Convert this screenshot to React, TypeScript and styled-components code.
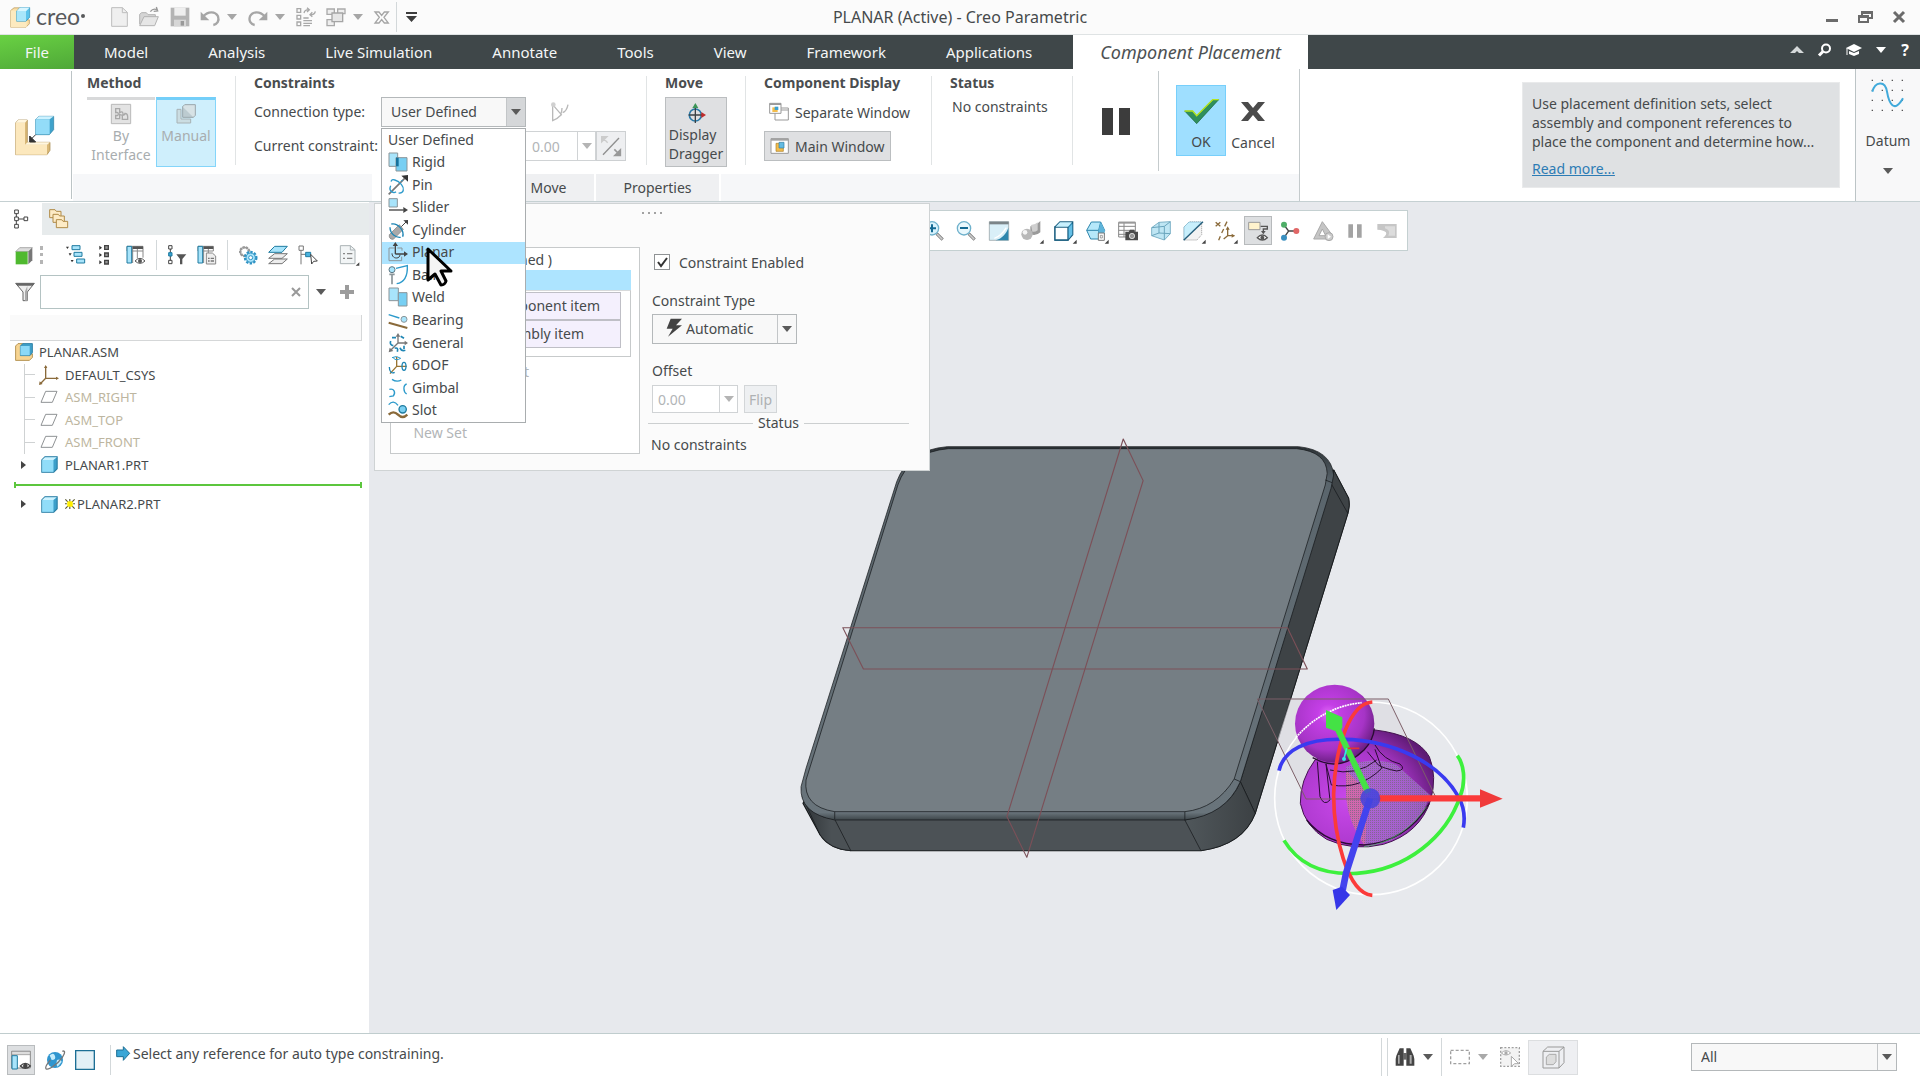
import React from 'react';
import styled, { createGlobalStyle, css } from 'styled-components';

const GlobalStyle = createGlobalStyle`
  *, *::before, *::after { box-sizing: border-box; }
  body { margin: 0; background: #fff; }
  body, button, input, select { font-family: "Noto Sans", "Open Sans", sans-serif; font-size: 14px; color: #464a4c; }
  button { border: 0; padding: 0; background: none; cursor: default; }
  svg { display: block; flex: none; overflow: visible; }
  ul { list-style: none; margin: 0; padding: 0; }
`;

/* ---------- icon helpers ---------- */
type IconProps = { w?: number; h?: number; vb?: string; children?: React.ReactNode };
const Icon = ({ w = 20, h = 20, vb = '0 0 60 60', children }: IconProps) => (
  <svg width={w} height={h} viewBox={vb} fill="none" aria-hidden="true">{children}</svg>
);
const Caret = ({ c = '#5a5a5a' }: { c?: string }) => (
  <svg width="10" height="6" viewBox="0 0 10 6" aria-hidden="true"><path d="M0 0h10L5 6z" fill={c} /></svg>
);
const CornerMark = () => <path d="M68 56v12H56z" fill="#444" />;

const blue = '#a8e4fb';
const teal = '#1f7ba0';
const tan = '#8a6a3a';

const I = {
  logo: (
    <Icon w={20} h={21} vb="0 0 60 62">
      <path d="M2 10 12 2h20v36h26v12L48 60H2z" fill="#fbdfa6" stroke="#b08d4c" strokeWidth="2" />
      <path d="M2 10h16v34h32v16H2z" fill="#fdeabf" />
      <path d="M20 12 30 1h29v29L48 42H20z" fill="#5cc3ec" stroke="#2c8fb8" strokeWidth="2" />
      <path d="M20 12h28v30H20z" fill="#a9e6fb" /><path d="m20 12 10-11h29L48 12z" fill="#d9f6ff" />
    </Icon>
  ),
  newFile: <Icon w={17} h={20} vb="0 0 51 60"><path d="M2 2h32l15 14v42H2z" fill="#efefef" stroke="#bdbdbd" strokeWidth="3" /><path d="M34 2v15h15" stroke="#bdbdbd" strokeWidth="3" /></Icon>,
  open: <Icon><path d="M2 52V22l6-5h14l5 6h22v8" fill="#d5d5d5" stroke="#b3b3b3" strokeWidth="3" /><path d="m2 56 13-27h43L47 56z" fill="#e6e6e6" stroke="#b3b3b3" strokeWidth="3" /><path d="M34 14Q42 3 54 8m-2-8 4 12-12 1" stroke="#999" strokeWidth="4" /></Icon>,
  save: <Icon><path d="M2 2h56v56H2z" fill="#b4b4b4" /><path d="M13 2h34v24H13z" fill="#efefef" /><path d="M12 38h36v20H12z" fill="#d6d6d6" /><path d="M32 42h10v14H32z" fill="#999" /></Icon>,
  undo: <Icon><path d="M10 28C24 12 46 12 54 28c5 14-3 24-14 26" stroke="#a6a6a6" strokeWidth="7" /><path d="M2 14v26h26z" fill="#a6a6a6" /></Icon>,
  redo: <Icon><path d="M50 28C36 12 14 12 6 28c-5 14 3 24 14 26" stroke="#a6a6a6" strokeWidth="7" /><path d="M58 14v26H32z" fill="#a6a6a6" /></Icon>,
  regen: <Icon><path d="M3 5h11v11H3zM3 25h11v11H3zM3 45h11v11H3zM22 33h16M22 41h26M22 49h26M22 56h20" stroke="#a8a8a8" strokeWidth="4" /><path d="M24 18q2-10 14-10m-5-6 7 6-7 7m25-2q-2 10-14 10m5 6-7-6 7-7" stroke="#a8a8a8" strokeWidth="4" /></Icon>,
  windows: <Icon><path d="M3 6h22v16H3zM35 6h22v14H35zM3 38h22v18H3z" fill="#eee" stroke="#aaa" strokeWidth="4" /><path d="M18 18h32v26H18z" fill="#e6e6e6" stroke="#a5a5a5" strokeWidth="4" /></Icon>,
  closeX: <Icon w={15} h={13} vb="0 0 45 39"><path d="M3 3h12l8 10 8-10h12L30 19l13 17H31l-8-10-8 10H3l13-17z" stroke="#a5a5a5" strokeWidth="4" /></Icon>,
  overflow: <Icon w={11} h={10} vb="0 0 11 10"><path d="M0 0h11v2H0zM0 4h11L5.500 10z" fill="#3d3d3d" /></Icon>,
  assemble: (
    <Icon w={39} h={39} vb="0 0 117 117">
      <path d="M2 20 10 12h27v67h68v24l-9 13H2z" fill="#d9b877" stroke="#a28244" strokeWidth="2" />
      <path d="M2 20h28v66h66v30H2z" fill="#fce8bd" /><path d="m2 20 8-8h27l-7 8zM30 86l8-7h67l-9 7z" fill="#fff6df" />
      <path d="M62 10 72 1h44v40l-13 15H62z" fill="#3fa2cb" stroke="#2a7da2" strokeWidth="2" /><path d="M62 10h42v45H62z" fill="#93dcf8" /><path d="m62 10 10-9h44l-12 9z" fill="#cdf2ff" />
      <path d="M62 56 50 68M44 60v18h18z" stroke="#333" strokeWidth="3" fill="#333" />
    </Icon>
  ),
  iface: <Icon><path d="M1 1h58v58H1z" fill="#e3e3e3" stroke="#b9b9b9" strokeWidth="3" /><path d="M14 14h12v12q8-6 10 2t-10 4v12H14V34q8 2 8-4t-8-4zM34 46V34q8 0 8-6 8 0 8 10v8z" stroke="#a9a9a9" strokeWidth="4" /></Icon>,
  manual: <Icon><path d="M3 16h12v29h29v12H3z" fill="#cbdde2" stroke="#a8b2b5" strokeWidth="3" /><path d="M20 8h32v32H20z" fill="#bccbd0" stroke="#9aa7ab" strokeWidth="3" /><path d="m20 8 6-6h32v32l-6 6" fill="#d7e2e5" stroke="#9aa7ab" strokeWidth="3" /></Icon>,
  convert: <Icon><path d="M8 10v46q12-4 26-18L8 8m30 24q12-4 16-24M32 38q4-10 4-20" stroke="#b9b9b9" strokeWidth="4" /><circle cx="10" cy="8" r="7" fill="#d0d0d0" /></Icon>,
  flipDir: <Icon><path d="M6 56 54 6" stroke="#8f8f8f" strokeWidth="4" /><path d="M2 2h16L2 18zM4 4l16 16" fill="#ccc" stroke="#ccc" strokeWidth="4" /><path d="M58 58V42L42 58zM54 54 40 40" fill="#999" stroke="#999" strokeWidth="5" /></Icon>,
  dragger: <Icon><circle cx="28" cy="36" r="18" stroke="#2779a8" strokeWidth="5" /><path d="M28 60V12M8 36h40" stroke="#3b4246" strokeWidth="4" /><path d="m28 0 9 15H19z" fill="#3d9558" /><path d="m60 36-14-9v18z" fill="#c02b2b" /></Icon>,
  sepWin: <Icon><path d="M18 18h40v36H18zM18 24h40" fill="#fff" stroke="#999" strokeWidth="3" /><path d="M2 4h34v30H2z" fill="#fff" stroke="#999" strokeWidth="3" /><path d="M2 4h34v5H2z" fill="#999" /><path d="M10 16h16v14H10z" fill="#f3bd4c" /><path d="M17 14h11v10H17z" fill="#3aa0d0" /></Icon>,
  mainWin: <Icon><path d="M3 8h52v44H3z" fill="#fff" stroke="#999" strokeWidth="3" /><path d="M3 8h52v6H3z" fill="#a2a2a2" /><path d="M18 22h22v24H18z" fill="#f3bd4c" stroke="#a97f28" strokeWidth="2" /><path d="M27 19h15v17H27z" fill="#64bbe2" stroke="#2d7ea5" strokeWidth="2" /></Icon>,
  pause: <Icon w={28} h={27} vb="0 0 28 27"><path d="M0 0h11v27H0zM17 0h11v27H17z" fill="#3c3c3c" /></Icon>,
  ok: <Icon w={35} h={25} vb="0 0 105 75"><path d="M2 36h24l12 14L86 2h18L38 74z" fill="#2f8f5b" stroke="#1e6640" strokeWidth="2" /><path d="M2 36h24l12 14L86 2h18" stroke="#b5e61d" strokeWidth="4" /></Icon>,
  cancel: <Icon w={24} h={19} vb="0 0 24 19"><path d="M0 0h7l5 6 5-6h7l-8 9.500 8 9.500h-7l-5-6-5 6H0l8-9.500z" fill="#4b4b4b" /></Icon>,
  datum: (
    <Icon w={34} h={34} vb="0 0 102 102">
      {[4, 34, 64, 94].map(y => [4, 34, 64, 94].map(x => <path key={`${x}-${y}`} d={`M${x - 2} ${y - 2}h4v4h-4z`} fill="#555" />))}
      <path d="M4 38C12 8 42 2 48 38s22 66 48 20" stroke="#41aadb" strokeWidth="6" />
    </Icon>
  ),
  treeTab: <Icon w={15} h={20} vb="0 0 45 60"><path d="M2 3h11v11H2zM2 24h11v11H2zM2 46h11v11H2zM30 24h11v11H30zM7 14v10M7 35v11M13 30h17" stroke="#444" strokeWidth="3" /></Icon>,
  folders: <Icon>{[[2, 2], [12, 16], [22, 32]].map(([x, y]) => <path key={x} d={`M${x} ${y}h16l4 5h14v19H${x}z`} fill="#fdebc6" stroke="#b08b48" strokeWidth="3" />)}</Icon>,
  greenCube: <Icon><path d="m2 20 12-12h38L40 20z" fill="#ddd" stroke="#888" strokeWidth="2" /><path d="M40 20 52 8v38L40 58z" fill="#777" /><path d="M2 20h36v38H2z" fill="#4fb92f" /></Icon>,
  expand: <Icon>{[[0, 2, 18], [8, 22, 24], [14, 42, 32]].map(([x, y, r]) => <g key={y}><path d={`M${x} ${y + 3}h9l-5 7z`} fill="#333" /><path d={`M${r} ${y}h24v12h-24z`} fill={blue} stroke={teal} strokeWidth="3" /></g>)}</Icon>,
  list: <Icon>{[2, 24, 46].map(y => <g key={y}><path d={`M10 ${y}l8 6-8 6z`} fill="#333" /><path d={`M26 ${y}h11v11h-11z`} fill="#999" stroke="#444" strokeWidth="4" /></g>)}</Icon>,
  columnsEye: <Icon><path d="M3 4h48v14H3zM20 4v50M34 4v36M51 18v20" stroke="#888" strokeWidth="3" /><path d="M3 4h14v50H3z" fill={blue} stroke={teal} strokeWidth="3" /><path d="M20 4h31v8H20z" fill="#555" /><path d="M27 48q15-16 30 0-15 14-30 0z" fill="#fff" stroke="#555" strokeWidth="3" /><circle cx="42" cy="48" r="6" fill="#555" /></Icon>,
  filterTree: <Icon><path d="M5 2h10v10H5zM5 46h10v10H5zM10 12v34" stroke="#444" strokeWidth="3" /><path d="M5 23h10v10H5z" fill="#39a4d4" stroke={teal} strokeWidth="3" /><path d="M28 28h30L46 42v16h-7V42z" fill="#555" /></Icon>,
  columnsDoc: <Icon><path d="M3 4h46v14H3zM20 4v50M34 4v20" stroke="#888" strokeWidth="3" /><path d="M3 4h14v50H3z" fill={blue} stroke={teal} strokeWidth="3" /><path d="M20 4h29v8H20z" fill="#555" /><path d="M28 24h18l10 9v24H28z" fill="#eee" stroke="#888" strokeWidth="3" /><path d="M33 40h18M33 48h18" stroke="#777" strokeWidth="4" strokeDasharray="5 3 12 0" /></Icon>,
  gears: <Icon><circle cx="20" cy="20" r="13" stroke="#999" strokeWidth="8" strokeDasharray="6 3" /><circle cx="20" cy="20" r="13" stroke="#999" strokeWidth="4" /><circle cx="38" cy="38" r="17" fill="#e5f7ff" stroke="#2f93c4" strokeWidth="7" strokeDasharray="7 4" /><circle cx="38" cy="38" r="14" fill={blue} stroke="#2f93c4" strokeWidth="3" /><circle cx="38" cy="38" r="6" fill="#fff" stroke="#2f93c4" strokeWidth="3" /></Icon>,
  layers: <Icon><path d="M2 56h40l16-14H20zM2 40h40l16-14H20z" fill="#ededed" stroke="#777" strokeWidth="3" /><path d="M2 22h40L58 4H20z" fill={blue} stroke={teal} strokeWidth="3" /></Icon>,
  pickTree: <Icon><path d="M3 3h13v13H3zM9 16v42M9 28h14" stroke="#777" strokeWidth="3" /><path d="M23 22h15v13H23z" fill="#4bb4df" stroke={teal} strokeWidth="3" /><path d="m38 28 20 20-11 1-6 8z" fill="#fff" stroke="#444" strokeWidth="3" /></Icon>,
  docList: <Icon><path d="M4 2h30l14 12v42H4z" fill="#f2f5f6" stroke="#aab2b5" strokeWidth="3" /><path d="M34 2v13h14" stroke="#aab2b5" strokeWidth="3" /><path d="M12 26h6M24 26h16M12 40h6M24 40h16" stroke="#888" strokeWidth="4" /><path d="M61 52v10H50z" fill="#444" /></Icon>,
  funnel: <Icon><path d="M2 4h56L37 30v26H24V30z" fill="#eee" stroke="#666" strokeWidth="3" /><path d="M2 4h56l-5 7H7z" fill="#666" /><path d="M37 12v44h-7V28z" fill="#aaa" /></Icon>,
  asm: <Icon w={18} h={18}><path d="m2 10 8-8h16v34h32v12L48 58H2z" fill="#f7d491" stroke="#b08d4c" strokeWidth="3" /><path d="M18 10 26 2h32v30L50 42H18z" fill="#3f9fc8" stroke="#2c7ea3" strokeWidth="3" /><path d="M18 10h31v31H18z" fill="#8bd9f7" /></Icon>,
  csys: <Icon><path d="M20 4v36h34M20 40 4 56" stroke={tan} strokeWidth="4" /><path d="m20 0 5 9H15zM60 40l-9 5V35zM0 60l2-11 9 8z" fill={tan} /></Icon>,
  plane: <Icon w={18} h={14} vb="0 0 54 42"><path d="M17 4h34L37 37H3z" stroke="#8f9294" strokeWidth="3" /></Icon>,
  part: <Icon w={17} h={17}><path d="M3 14 14 3h43v42L45 57H3z" fill="#3c9fca" stroke="#2a7ea4" strokeWidth="4" /><path d="M4 14h40v42H4z" fill="#91ddf9" /><path d="M4 14 14 4h42L44 14z" fill="#cef3ff" /></Icon>,
  spark: <Icon w={10} h={10} vb="0 0 27 27"><path d="M6 6h15v15H6z" fill="#ffee00" /><path d="M1 1l6 6M26 1l-6 6M1 26l6-6M26 26l-6-6M13 0v6M13 21v6M0 13h5M22 13h5" stroke="#55552a" strokeWidth="3" /></Icon>,
  expander: <Icon w={5} h={8} vb="0 0 5 8"><path d="M0 0l5 4-5 4z" fill="#444" /></Icon>,
};

const menuIcons: Record<string, React.ReactNode> = {
  Rigid: <Icon><path d="M3 3h26v40H3z" fill={blue} stroke="#8b9599" strokeWidth="3" /><path d="M24 17h33v40H24z" fill="#77cff3" stroke="#8b9599" strokeWidth="3" /><path d="M24 17h8v26h-8z" fill="#15719c" /></Icon>,
  Pin: <Icon><path d="M2 58 50 10" stroke="#777" strokeWidth="5" /><path d="M60 0v20L40 2z" fill="#333" /><path d="M10 20c-2-12 20-4 30 8s8 28-8 26M8 32c-8 18 10 24 16 18M40 18l4-2" stroke="#2c9acb" strokeWidth="4" /></Icon>,
  Slider: <Icon><path d="M3 5h25v25H3z" fill={blue} stroke="#8b9599" strokeWidth="3" /><path d="M3 39h44" stroke="#444" strokeWidth="4" /><path d="m60 39-14-9v18z" fill="#444" /></Icon>,
  Cylinder: <Icon><path d="M4 44 34 14l12 14-30 30q-14 0-12-14z" fill="#a9a9a9" stroke="#777" strokeWidth="2" /><path d="M40 20 54 6" stroke="#444" strokeWidth="3" /><path d="M60 0v14L46 1z" fill="#444" /><path d="M10 12c20-4 40 20 34 38M6 22c0 20 18 32 32 30" stroke="#1f86b5" strokeWidth="4" /></Icon>,
  Planar: <Icon><path d="M20 18H3v38h38V44M28 18h14v8" stroke="#8b9599" strokeWidth="3" /><path d="M22 36V8M22 36h28" stroke="#444" strokeWidth="4" /><path d="m22 0 8 12H14zM60 36l-12-8v16z" fill="#444" /><path d="M12 34c0 18 24 18 24 4" stroke="#444" strokeWidth="3" /></Icon>,
  Ball: <Icon><circle cx="12" cy="14" r="9" fill={blue} stroke="#5d7884" strokeWidth="3" /><path d="M12 26v32M4 28h16" stroke="#8b9599" strokeWidth="5" /><path d="M24 10 58 2q2 48-32 54" stroke="#2c9acb" strokeWidth="4" /></Icon>,
  Weld: <Icon><path d="M3 3h28v38H3z" fill={blue} stroke="#8b9599" strokeWidth="3" /><path d="M31 17h26v40H31z" fill="#77cff3" stroke="#8b9599" strokeWidth="3" /></Icon>,
  Bearing: <Icon><path d="m2 14 32 10" stroke="#2c9acb" strokeWidth="4" /><path d="m2 38 56 16" stroke="#8a6a3a" strokeWidth="6" /><circle cx="48" cy="28" r="9" fill={blue} stroke="#8b9599" strokeWidth="3" /></Icon>,
  General: <Icon><path d="M30 30V8M30 30h22M30 30 8 52" stroke="#777" strokeWidth="4" /><path d="m30 0 7 11H23zM60 30l-10-7v14zM2 58l3-14 11 10z" fill="#777" /><path d="M12 14h12M38 10l10 6M8 24q-4 12 8 14M36 44q4 12 16 8M48 38v10M20 46q12-4 8 10" stroke="#1f86b5" strokeWidth="5" /></Icon>,
  '6DOF': <Icon><path d="M26 34V6M26 34h30M26 34 6 56" stroke="#9a7431" strokeWidth="4" /><path d="M12 8q14-8 26 2M14 6q8 14 24 4" stroke="#2c9acb" strokeWidth="3" /><ellipse cx="48" cy="34" rx="6" ry="12" stroke="#1f86b5" strokeWidth="4" /><path d="M4 36c0 16 8 20 16 16" stroke="#1f86b5" strokeWidth="4" /></Icon>,
  Gimbal: <Icon><path d="M12 4q14 10 28 2M56 18c-12 4-10 24 0 30M4 34c14-4 20 10 12 20l-12 2" stroke="#2c9acb" strokeWidth="4" /></Icon>,
  Slot: <Icon><path d="M2 44q14-14 28 0t28 0" stroke="#8a6a3a" strokeWidth="7" /><path d="M2 14q14-16 28 2" stroke="#2c9acb" strokeWidth="4" /><circle cx="44" cy="28" r="11" fill="#7bd0f2" stroke={teal} strokeWidth="4" /></Icon>,
};

const viewTools: { name: string; on?: boolean; icon: React.ReactNode }[] = [
  { name: 'Refit', icon: <Icon><circle cx="24" cy="24" r="18" fill="#d9f3fd" stroke="#2a86ad" strokeWidth="4" /><path d="m38 38 18 18" stroke="#999" strokeWidth="8" /></Icon> },
  { name: 'Zoom in', icon: <Icon><path d="m38 38 18 18" stroke="#777" strokeWidth="9" /><path d="m39 39 16 16" stroke="#ccc" strokeWidth="5" /><circle cx="24" cy="22" r="20" fill="#d9f3fd" stroke="#6fb1cc" strokeWidth="4" /><path d="M12 22h24M24 10v24" stroke="#146a93" strokeWidth="6" /></Icon> },
  { name: 'Zoom out', icon: <Icon><path d="m38 38 18 18" stroke="#777" strokeWidth="9" /><path d="m39 39 16 16" stroke="#ccc" strokeWidth="5" /><circle cx="24" cy="22" r="20" fill="#e9f8fd" stroke="#6fb1cc" strokeWidth="4" /><path d="M12 21h24" stroke="#146a93" strokeWidth="6" /></Icon> },
  { name: 'Repaint', icon: <Icon><path d="M1 2h58v56H1z" fill="#d9eff8" stroke="#8b9599" strokeWidth="2" /><path d="M1 2h58v8H1z" fill="#7b8488" /><path d="M58 20v38H20C40 52 52 38 58 20z" fill="#2e86ad" /><path d="M16 52Q36 46 52 20" stroke="#fff" strokeWidth="4" /></Icon> },
  { name: 'Rendering', icon: <Icon><path d="M28 16q14 0 30-16v34q-12 12-30 6z" fill="#9a9a9a" /><path d="M30 12q12 0 20-8v24q-8 6-16 4z" fill="#cfcfcf" /><circle cx="18" cy="40" r="17" fill="#b8b8b8" /><circle cx="12" cy="34" r="7" fill="#f4f4f4" /><CornerMark /></Icon> },
  { name: 'Display style', icon: <Icon><path d="M3 18 18 3h38v38L42 57H3z" fill="#2c87b0" stroke="#1b5f80" strokeWidth="4" /><path d="M3 18h39v39H3z" fill="#fff" stroke="#1b5f80" strokeWidth="4" /><path d="M5 17 18 4h36L42 17z" fill="#c8f0fd" /><path d="M44 20 55 8v32L44 54z" fill="#64bfe6" /><CornerMark /></Icon> },
  { name: 'Saved orientations', icon: <Icon><path d="M2 28 16 3h28l12 25-14 26H14z" fill="#b6e8fa" stroke="#2e86ad" strokeWidth="3" /><path d="M2 28h36L44 3M38 28v26" stroke="#2e86ad" strokeWidth="3" /><path d="M38 28 44 3l12 25v14H38z" fill="#5eb4da" /><path d="M37 36h18v22H37z" fill="#fff" stroke="#777" strokeWidth="3" /><path d="M43 43h6v8h-6z" stroke="#777" strokeWidth="2" /><CornerMark /></Icon> },
  { name: 'View manager', icon: <Icon><path d="M2 4h50v44H2zM2 16h50M2 28h50M2 40h30M18 4v44" stroke="#888" strokeWidth="3" fill="#fff" /><path d="M2 2h50v6H2z" fill="#999" /><path d="M22 32h10l4-6h12l3 6h9v26H22z" fill="#4c4c4c" /><circle cx="42" cy="45" r="8" fill="#999" stroke="#fff" strokeWidth="2" /></Icon> },
  { name: 'Perspective', icon: <Icon><path d="M2 20 24 4l34-2v36L40 57 2 44z" fill="#bfe6f4" stroke="#7fb3c8" strokeWidth="3" /><path d="M2 20 40 16l18-14M40 16v41M24 4v32L2 44M24 36l34 2" stroke="#6aa5bd" strokeWidth="3" /></Icon> },
  { name: 'Section', icon: <Icon><path d="M3 18 18 3h38v38L42 57H3z" fill="#f3f3f3" stroke="#999" strokeWidth="3" strokeDasharray="3 3" /><path d="M3 57V18L18 3h38z" fill="#c8effc" stroke="#7bb7cf" strokeWidth="2" /><path d="M2 58 60 2" stroke="#245d7a" strokeWidth="4" /><CornerMark /></Icon> },
  { name: 'Datum display', icon: <Icon><path d="m2 4 14 12M16 4 2 16M36 2l-7 14M26 24l-6 12M16 46l-5 12" stroke={tan} strokeWidth="4" /><path d="M38 22v22h20M38 44 26 54" stroke={tan} strokeWidth="4" /><path d="m60 44-10-6v12zM38 16l6 10H32z" fill={tan} /><CornerMark /></Icon> },
  { name: 'Annotation display', on: true, icon: <Icon><path d="M2 4h34v22H2z" fill="#fff3cd" stroke="#999" strokeWidth="3" /><path d="M38 16h20v8H46v12" stroke="#555" strokeWidth="4" /><path d="m46 40-7-10h14z" fill="#555" /><path d="M28 50q15-16 30 0-15 14-30 0z" fill="#fff" stroke="#555" strokeWidth="4" /><circle cx="43" cy="50" r="6" fill="#555" /></Icon> },
  { name: 'Spin center', icon: <Icon><path d="M12 12 26 30 12 50M26 30h22" stroke="#444" strokeWidth="4" /><circle cx="12" cy="11" r="9" fill="#4fae68" /><circle cx="49" cy="30" r="9" fill="#e06666" /><circle cx="12" cy="50" r="9" fill="#3a8fbf" /></Icon> },
  { name: 'Simulation', icon: <Icon><path d="M28 2 2 54h44L56 40z" fill="#c5c5c5" stroke="#aaa" strokeWidth="3" /><path d="M28 24 18 44h20z" fill="#fff" stroke="#aaa" strokeWidth="3" /><circle cx="48" cy="47" r="12" fill="#ccc" stroke="#aaa" strokeWidth="3" /><path d="m44 40 10 7-10 7z" fill="#fff" /></Icon> },
  { name: 'Pause simulation', icon: <Icon><path d="M10 10h14v40H10zM36 10h14v40H36z" fill="#a3a3a3" /></Icon> },
  { name: 'Simulation results', icon: <Icon><path d="M1 9h58v42H18q26-22-17-25z" fill="#c6c6c6" /><path d="M24 16h30v28H34q8-16-10-22z" fill="#dcdcdc" /></Icon> },
];

/* ---------- page frame ---------- */
const Page = styled.div`display: flex; flex-direction: column; min-height: 100vh; background: #fff;`;
const flexCenter = css`display: flex; align-items: center; justify-content: center;`;

const TitleBar = styled.header`
  display: grid; grid-template-columns: 1fr auto 1fr; align-items: center; height: 35px;
  background: #fbfbfb; border-bottom: 1px solid #dfe3e4;
`;
const QuickBar = styled.div`display: flex; align-items: center; padding-left: 10px; height: 34px;`;
const Brand = styled.span`
  font-family: Lato, sans-serif; font-size: 23px; line-height: 28px; color: #58595b; margin: 0 0 2px 6px; width: 75px;
  display: inline-flex; align-items: center; gap: 1px;
`;
const BrandDot = styled.i`width: 4px; height: 4px; border-radius: 50%; background: #58595b;`;
const QuickButton = styled.button<{ $gap?: number }>`${flexCenter} margin-right: ${p => p.$gap ?? 11}px;`;
const VLine = styled.span<{ $h?: number; $m?: string }>`
  width: 1px; height: ${p => p.$h ?? 30}px; margin: ${p => p.$m ?? '0'}; background: #d3d8da; flex: none;
`;
const Title = styled.h1`margin: 0; font-size: 16px; line-height: 20px; font-weight: 400;`;
const WindowButtons = styled.div`display: flex; justify-content: flex-end; align-items: center; gap: 20px; padding-right: 15px;`;

const TabBar = styled.nav`display: flex; height: 34px; background: #3f4749; color: #fff;`;
const Tab = styled.button<{ $kind?: 'file' | 'active' }>`
  color: #f4f6f6; padding: 0 30px; font-size: 15px; height: 34px; white-space: nowrap;
  ${p => p.$kind === 'file' && css`width: 74px; padding: 0; background: linear-gradient(170deg, #69d143, #4fa838);`}
  ${p => p.$kind === 'active' && css`background: #fff; color: #4d5153; font-style: italic; font-size: 18px; padding: 0; width: 235px; margin-left: 11px;`}
`;
const TabTools = styled.div`display: flex; align-items: center; margin-left: auto; gap: 14px; padding: 0 10px 4px 0;`;
const HelpMark = styled.button`color: #fff; font-weight: 700; font-size: 16px; line-height: 20px; width: 10px;`;

const Ribbon = styled.section`display: flex; height: 133px; border-bottom: 1px solid #c5d0d2; background: #fff;`;
const RibbonMark = styled.div`
  width: 72px; flex: none; margin: 2px 0; border-right: 1px solid #bcc4c6; padding: 45px 0 0 15px;
`;
const Dash = styled.div`display: flex; flex-direction: column; width: 1228px; padding-left: 1px; border-right: 1px solid #c5cbcd;`;
const Groups = styled.div`display: flex; height: 105px; padding: 7px 0 9px;`;
const Group = styled.section<{ $w: number; $pl?: number }>`
  width: ${p => p.$w}px; padding-left: ${p => p.$pl ?? 18}px; border-right: 1px solid #e1e4e5; position: relative; flex: none;
`;
const GroupTitle = styled.h2`margin: 0 0 7px; font-size: 14px; line-height: 14px; font-weight: 700; color: #4a4d4f;`;
const Row = styled.div<{ $gap?: number }>`display: flex; align-items: center; gap: ${p => p.$gap ?? 0}px;`;
const Stack = styled.div`display: flex; flex-direction: column; gap: 4px;`;

const MethodButton = styled.button<{ $on?: boolean }>`
  width: ${p => (p.$on ? 60 : 68)}px; height: 70px; display: flex; flex-direction: column; align-items: center;
  padding-top: 4px; color: #a8adaf; line-height: 19px; gap: 2px;
  border-top: 3px solid #d8d9da;
  ${p => p.$on && css`background: #cfeffc; border: 1px solid #84d5fa; border-top: 3px solid #74cff9;`}
`;
const FieldLabel = styled.label`width: 127px; line-height: 30px; flex: none; white-space: nowrap;`;

const SelectBox = styled.div<{ $w: number; $h?: number; $dim?: boolean }>`
  position: relative; width: ${p => p.$w}px; height: ${p => p.$h ?? 30}px; flex: none; display: flex;
  border: 1px solid ${p => (p.$dim ? '#d3d6d8' : '#b4b8ba')}; background: #f8f8f8;
  select { appearance: none; border: 0; background: none; width: 100%; padding: 0 24px 2px 9px; outline: 0; color: inherit; opacity: 1; }
  color: ${p => (p.$dim ? '#b2b5b7' : '#464a4c')};
`;
const SelectArrow = styled.span<{ $on?: boolean }>`
  ${flexCenter} position: absolute; top: 0; right: 0; bottom: 0; width: 19px; pointer-events: none;
  border-left: 1px solid #c3c6c8; background: ${p => (p.$on ? '#d5d7d9' : 'transparent')};
`;
const IconSelect = styled(SelectBox)`select { padding-left: 33px; } > svg { position: absolute; left: 11px; top: 3px; }`;

const NumberBox = styled.div<{ $w: number; $h: number }>`
  display: flex; width: ${p => p.$w}px; height: ${p => p.$h}px; border: 1px solid #d0d3d5; background: #fff;
  input { border: 0; width: 100%; min-width: 0; background: none; color: #b2b5b7; padding: 0 0 0 5px; }
  button { ${flexCenter} width: 18px; flex: none; border-left: 1px solid #d0d3d5; }
`;
const OffsetBox = styled(NumberBox)`margin-left: 3px; input { padding-left: 11px; }`;
const ConvertButton = styled.button`margin-left: 24px;`;
const SquareButton = styled.button`${flexCenter} width: 30px; height: 30px; background: #eeeff1; border: 1px solid #cdd0d2;`;

const Menu = styled.ul`
  position: absolute; z-index: 30; left: 145px; top: 52px; width: 145px; height: 295px; background: #fff;
  border: 1px solid #a9adaf; display: flex; flex-direction: column;
`;
const MenuItem = styled.li<{ $hot?: boolean }>`
  flex: 1; display: flex; align-items: center; gap: 4px; padding: 0 0 1px 6px; line-height: 20px;
  background: ${p => (p.$hot ? '#ade4ff' : 'none')};
`;
const Pointer = styled.div`position: absolute; z-index: 40; left: 190px; top: 171px;`;

const PressedButton = styled.button<{ $w: number; $tall?: boolean }>`
  width: ${p => p.$w}px; height: ${p => (p.$tall ? 70 : 30)}px; background: #dfe0e2; border: 1px solid #bbbec0;
  display: flex; align-items: center; gap: ${p => (p.$tall ? 2 : 5)}px; line-height: 19px; padding-left: ${p => (p.$tall ? 0 : 5)}px;
  ${p => p.$tall && css`flex-direction: column; padding-top: 5px; text-align: left;`}
`;
const PlainButton = styled.button`display: flex; align-items: center; height: 30px; gap: 6px; padding-left: 5px; margin-bottom: 4px;`;
const StatusText = styled.p`margin: 0 0 0 2px; line-height: 20px;`;
const PauseButton = styled.button`${flexCenter} width: 86px; border-right: 1px solid #c5cbcd; height: 100px; margin-top: -5px;`;
const Decision = styled.div`display: flex; padding: 9px 0 0 17px; gap: 2px;`;
const BigButton = styled.button<{ $on?: boolean }>`
  width: 50px; height: 71px; display: flex; flex-direction: column; align-items: center; justify-content: space-between;
  padding: 13px 0 4px; line-height: 19px; white-space: nowrap;
  ${p => (p.$on ? css`background: #9fdfff; border: 1px solid #77cffb;` : css`padding-top: 17px;`)}
`;
const DashTabs = styled.div`display: flex; height: 27px; background: #f6f7f9; padding-left: 299px;`;
const DashTab = styled.button<{ $w: number; $active?: boolean }>`
  width: ${p => p.$w}px; background: ${p => (p.$active ? '#fff' : '#eff0f2')}; border-right: 2px solid #fff;
`;
const HelpBox = styled.aside`
  width: 318px; height: 106px; margin: 13px 15px 0 auto; padding: 11px 9px; background: #dfe1e3; border: 1px solid #e9eaeb;
  line-height: 19px; white-space: nowrap;
  p { margin: 0 0 8px; }
  a { color: #2d7cb5; line-height: 20px; }
`;
const DatumButton = styled.button`
  width: 65px; background: #f8f8f9; border-left: 1px solid #bcc4c6; display: flex; flex-direction: column; align-items: center;
  padding: 10px 0 27px; justify-content: space-between;
`;

/* ---------- body ---------- */
const Body = styled.main`flex: 1; display: flex; min-height: 831px;`;
const TreePane = styled.aside`width: 369px; flex: none; display: flex; flex-direction: column; background: #fff; font-size: 13px;`;
const TreeTabs = styled.div`display: flex; height: 32px; background: #e7ebec; margin-top: 1px;`;
const TreeTab = styled.button<{ $on?: boolean }>`${flexCenter} width: ${p => (p.$on ? 42 : 34)}px; background: ${p => (p.$on ? '#fff' : 'none')};`;
const TreeTools = styled.div`display: flex; align-items: center; gap: 10px; height: 40px; padding: 0 10px 0 15px;`;
const Handle = styled.span`width: 3px; height: 18px; border-left: 3px dotted #b5b5b5; margin-right: 13px; margin-left: -5px;`;
const PushRight = styled.button`margin-left: auto;`;
const SearchRow = styled.div`display: flex; align-items: center; height: 34px; padding-left: 15px;`;
const SearchBox = styled.div`
  display: flex; align-items: center; width: 269px; height: 34px; margin: 0 7px 0 5px; padding-right: 7px; border: 1px solid #b4c3c3; background: #fff;
  input { flex: 1; min-width: 0; border: 0; outline: 0; background: none; }
`;
const AddButton = styled.button`margin-left: 14px;`;
const TreeHeader = styled.div`height: 26px; margin: 6px 7px 0 10px; background: #fafafa; border-right: 1px solid #d5d7d8; border-bottom: 1px solid #d5d7d8;`;
const Tree = styled.ul`display: flex; flex-direction: column; height: 135px; padding-left: 15px;`;
const TreeItem = styled.li<{ $dim?: boolean }>`
  flex: 1; display: flex; align-items: center; color: ${p => (p.$dim ? '#bdb6a0' : '#464a4c')}; gap: 6px;
`;
const Guide = styled.span`
  width: 12px; align-self: stretch; margin-left: 9px; margin-right: -3px; border-left: 1px solid #cfd2d3; display: flex; align-items: center;
  &::before { content: ''; width: 10px; border-top: 1px solid #cfd2d3; }
`;
const TreeToggle = styled.button`width: 12px; margin-left: 6px; ${flexCenter} justify-content: flex-start;`;
const InsertLine = styled.div`
  margin: 6px 7px 3px 14px; height: 6px; display: flex; align-items: center;
  border-left: 2px solid #5cc63d; border-right: 2px solid #5cc63d;
  &::before { content: ''; flex: 1; height: 2px; background: #5cc63d; }
`;
const SingleRow = styled.ul`height: 26px; display: flex; flex-direction: column; padding-left: 15px;`;
const TreeIcon = styled.span`width: 20px; ${flexCenter} flex: none;`;
const NewName = styled.span`display: inline-flex; align-items: center; gap: 2px;`;

const Canvas = styled.section`flex: 1; position: relative; background: #e7e9ed; min-width: 0; overflow: hidden;`;
const Scene = styled.svg`position: absolute; inset: 0; width: 100%; height: 100%;`;
const ViewBar = styled.div`
  position: relative; width: 526px; height: 41px; margin: 8px auto 0; display: flex; align-items: center; justify-content: space-around;
  padding: 0 3px; background: #fff; border: 1px solid #c4d0d1;
`;
const ViewButton = styled.button<{ $on?: boolean }>`
  ${flexCenter} width: 28px; height: 29px; border: 1px solid ${p => (p.$on ? '#b7babc' : 'transparent')}; background: ${p => (p.$on ? '#dddfe1' : 'none')};
`;

const Panel = styled.section`
  position: absolute; z-index: 10; left: 5px; top: 1px; width: 556px; height: 268px; background: #fbfbfb; border: 1px solid #cfd3d4;
  display: grid; grid-template-columns: 250px 261px; column-gap: 8px; padding: 43px 0 0 15px; align-items: start;
`;
const Grip = styled.span`
  position: absolute; top: 8px; left: 267px; width: 20px; height: 2px;
  background: repeating-linear-gradient(90deg, #a2a2a2 0 2px, transparent 2px 6px);
`;
const SetList = styled.div`height: 207px; border: 1px solid #c7cacb; background: #fff; padding-right: 8px; display: flex; flex-direction: column; align-items: flex-end;`;
const SetName = styled.div`line-height: 20px; width: 220px; text-align: right; padding: 2px 79px 0 0; white-space: nowrap; height: 22px;`;
const SetRow = styled.div`height: 20px; width: 220px; background: #ade4ff;`;
const RefBox = styled.div`width: 220px; height: 67px; border: 1px solid #c7cacb; border-top-color: #d8dadb; padding: 1px 9px 0 0; display: flex; flex-direction: column; align-items: flex-end;`;
const RefButton = styled.button<{ $pr: number }>`
  width: 190px; height: 28px; border: 1px solid #bfbfc6; background: #f4f0fd; text-align: right; padding: 0 ${p => p.$pr}px 1px 0;
`;
const NewLine = styled.button<{ $top: number; $w: number }>`
  display: block; color: #b2b5b7; line-height: 20px; margin: ${p => p.$top}px ${p => 226 - p.$w}px 0 0; width: ${p => p.$w}px; text-align: right;
  white-space: nowrap;
`;
const Options = styled.div`display: flex; flex-direction: column; padding: 4px 0 0 4px;`;
const CheckLabel = styled.label`
  display: flex; align-items: center; gap: 9px; height: 22px; margin-left: 2px; position: relative;
  input { appearance: none; width: 16px; height: 16px; margin: 0; border: 1px solid #8f9294; background: #fff; }
  svg { position: absolute; left: 3px; top: 6px; }
`;
const OptionLabel = styled.label<{ $top: number; $bottom: number }>`line-height: 20px; margin: ${p => p.$top}px 0 ${p => p.$bottom}px;`;
const FlipButton = styled.button`width: 33px; height: 28px; background: #eef0f2; border: 1px solid #d3d6d8; color: #aeb1b3; margin-left: 6px;`;
const Legend = styled.div`
  display: flex; align-items: center; gap: 5px; line-height: 20px; margin-left: -4px;
  &::before, &::after { content: ''; flex: 1; border-top: 1px solid #cccfd0; }
`;
const PanelStatus = styled.p`margin: 2px 0 0 -1px; line-height: 20px;`;

const StatusBar = styled.footer`display: flex; height: 47px; border-top: 1px solid #c0cdce; background: #fff; padding-right: 23px;`;
const StatusIcons = styled.div`display: flex; align-items: center; gap: 10px; padding: 5px 0 0 7px;`;
const StatusButton = styled.button<{ $on?: boolean }>`
  ${flexCenter} ${p => p.$on && css`width: 28px; height: 30px; background: #dddfe1; border: 1px solid #b9bcbe;`}
`;
const Message = styled.output`display: flex; align-items: center; gap: 3px; height: 20px; margin: 9px 0 0 5px;`;
const FilterIcons = styled.div`display: flex; align-items: center; margin-left: auto;`;
const FindMenu = styled.button`${flexCenter} width: 26px; height: 20px;`;
const PickButton = styled.button`margin-left: 4px;`;
const ToggleCube = styled.button`${flexCenter} width: 50px; height: 35px; background: #eeeff2; border: 1px solid #dcdee0; margin: 0 113px 0 8px;`;

/* ---------- 3D scene ---------- */
const SceneView = () => (
  <Scene viewBox="369 202 1551 831" preserveAspectRatio="xMidYMid meet" fill="none" aria-label="Planar assembly model">
    <defs>
      <radialGradient id="head" cx=".42" cy=".38" r=".65"><stop offset="0" stopColor="#e06bf5" /><stop offset=".2" stopColor="#c43fe6" /><stop offset=".7" stopColor="#a634c6" /><stop offset="1" stopColor="#651c7c" /></radialGradient>
      <radialGradient id="duck" cx=".35" cy=".6" r=".7"><stop offset="0" stopColor="#c948ea" /><stop offset=".6" stopColor="#ab38cc" /><stop offset="1" stopColor="#5e1a74" /></radialGradient>
      <linearGradient id="corner" x1="0" x2="1"><stop offset="0" stopColor="#50575b" /><stop offset="1" stopColor="#3c4144" /></linearGradient>
      <linearGradient id="lcorner" x1="0" x2="1"><stop offset="0" stopColor="#2e3336" /><stop offset=".6" stopColor="#4b5155" /></linearGradient>
      <linearGradient id="rim" x1="0" y1="0" x2="0" y2="1"><stop offset="0" stopColor="#2d3337" /><stop offset=".1" stopColor="#5a656c" /><stop offset=".98" stopColor="#69747b" /><stop offset="1" stopColor="#3d4549" /></linearGradient>
      <pattern id="mesh" width="6" height="6" patternUnits="userSpaceOnUse"><path d="M0 0h3v3H0z" fill="#77677f" /></pattern>
      <pattern id="greenMesh" width="6" height="6" patternUnits="userSpaceOnUse"><path d="M0 0h6v6H0z" fill="#3df03d" /><path d="M2 2h2v2H2z" fill="#8d4f9a" /></pattern>
    </defs>
    <g transform="translate(780 420) scale(.38265 .33333)" stroke="#15181a" strokeWidth="2" strokeLinejoin="round">
      <path d="M1447 150 1486 235Q1490 255 1484 280L1242 1180Q1210 1275 1100 1292H185Q130 1288 105 1245L60 1150 500 300z" fill="#4c5256" strokeWidth="3" />
      <path d="M1447 150 1486 235Q1490 255 1484 280L1242 1180 1203 1085 1440 190z" fill="#3e4346" />
      <path d="M1440 190 1484 280" />
      <path d="M1203 1085 1242 1180Q1210 1275 1100 1292L1058 1200Q1170 1180 1203 1085z" fill="url(#corner)" />
      <path d="M58 1130 105 1245Q130 1288 185 1292L143 1198Q80 1190 58 1130z" fill="url(#lcorner)" />
      <path d="M437 80H1355Q1440 90 1447 165L1440 205 1203 1085Q1165 1185 1058 1200H143Q50 1180 55 1100L68 1045 305 185Q335 90 437 80z" fill="url(#rim)" />
      <path d="M440 86H1350Q1428 95 1430 160L1425 195 1187 1077Q1140 1165 1058 1175H143Q60 1160 68 1080L308 195Q338 96 440 86z" fill="#757e84" />
      <path d="M143 1175v23M1058 1175v25M1187 1077l16 8M1425 180l18 8" />
      <path d="M897 57 949 182 645 1312 593 1190zM164 623H1326L1378 747H218z" stroke="#7c5058" strokeWidth="3" />
    </g>
    <g transform="translate(1240 660) scale(.33333)" strokeLinecap="butt">
      <path d="M152 117H445L590 417H198L112 241z" fill="#dcdadf" fillOpacity=".7" />
      <circle cx="393" cy="415" r="289" stroke="#fff" strokeWidth="5" />
      <path d="M225 300Q180 360 181 430 195 500 260 538 340 575 430 553 540 520 572 420 592 350 568 290 530 225 405 210L380 215z" fill="url(#duck)" stroke="#43124f" strokeWidth="3" />
      <path d="M318 320Q400 285 470 315L570 405Q540 500 450 543L375 558Q320 480 318 400z" fill="#a56fd0" fillOpacity=".75" />
      <path d="M318 330 385 400 375 558Q320 480 318 400z" fill="#d968a4" fillOpacity=".8" />
      <path d="M318 320Q400 285 470 315L570 405Q540 500 450 543L375 558Q320 480 318 400z" fill="url(#mesh)" fillOpacity=".75" />
      <path d="M200 480Q260 555 372 555 500 545 568 430" stroke="#2a0c33" strokeWidth="4" />
      <path d="M372 560Q484 547 560 440" stroke="#4fc964" strokeWidth="2" />
      <path d="M232 305 240 410Q252 440 270 420L258 312M405 255Q430 300 480 312 500 330 470 333 430 325 415 315L382 275M258 312 274 375Q360 390 425 325L405 268M270 330Q350 350 410 300" stroke="#2a0c33" strokeWidth="3" />
      <ellipse cx="284" cy="191" rx="119" ry="117" fill="url(#head)" />
      <path d="M218 293Q300 340 372 270 400 240 403 205" stroke="#2a0c33" strokeWidth="4" />
      <path d="M168 232Q250 140 365 128" stroke="#fff" strokeWidth="5" strokeDasharray="6 2" />
      <path d="M52 117H445L590 417H198z" stroke="#7c5f68" strokeWidth="3" />
      <path d="M117 332C130 270 200 235 310 238 460 240 600 310 655 410 672 440 676 470 670 503" stroke="#3a3af0" strokeWidth="11" />
      <path d="M132 541C180 620 260 645 350 640 500 630 620 530 660 410 680 360 670 310 652 287" stroke="#3df03d" strokeWidth="11" />
      <path d="M397 126C330 130 285 260 281 400 280 520 320 700 397 706" stroke="#fb3a3a" strokeWidth="11" />
      <path d="M285 190 385 398" stroke="url(#greenMesh)" strokeWidth="18" />
      <path d="M258 150 307 172V205L283 212 258 203z" fill="url(#greenMesh)" />
      <path d="M323 265h35" stroke="#e03434" strokeWidth="5" /><path d="M320 265 312 296" stroke="#35e6e6" strokeWidth="5" /><circle cx="312" cy="297" r="6" fill="#35e6e6" />
      <path d="M415 415H722" stroke="#fb3a3a" strokeWidth="19" /><path d="M720 388 788 416 720 443z" fill="#f03a3a" />
      <path d="M390 415 318 640 308 690" stroke="#4343ee" strokeWidth="20" /><path d="M278 690 306 680 330 705 289 750z" fill="#3636e8" />
      <circle cx="391" cy="415" r="30" fill="#4343dd" fillOpacity=".85" />
    </g>
  </Scene>
);

const tabs = ['Model', 'Analysis', 'Live Simulation', 'Annotate', 'Tools', 'View', 'Framework', 'Applications'];
const connections = ['User Defined', ...Object.keys(menuIcons)];

export default function App() {
  return (
    <Page>
      <GlobalStyle />
      <TitleBar>
        <QuickBar>
          {I.logo}
          <Brand>creo<BrandDot /></Brand>
          <QuickButton aria-label="New">{I.newFile}</QuickButton>
          <QuickButton aria-label="Open">{I.open}</QuickButton>
          <QuickButton aria-label="Save" $gap={10}>{I.save}</QuickButton>
          <QuickButton aria-label="Undo" $gap={7}>{I.undo}</QuickButton>
          <QuickButton aria-label="Undo history">{<Caret c="#a6a6a6" />}</QuickButton>
          <QuickButton aria-label="Redo" $gap={7}>{I.redo}</QuickButton>
          <QuickButton aria-label="Redo history">{<Caret c="#a6a6a6" />}</QuickButton>
          <QuickButton aria-label="Regenerate" $gap={10}>{I.regen}</QuickButton>
          <QuickButton aria-label="Windows" $gap={7}>{I.windows}</QuickButton>
          <QuickButton aria-label="Window list"><Caret c="#a6a6a6" /></QuickButton>
          <QuickButton aria-label="Close" $gap={7}>{I.closeX}</QuickButton>
          <VLine $m="0 9px 0 0" />
          <QuickButton aria-label="Customize toolbar">{I.overflow}</QuickButton>
        </QuickBar>
        <Title>PLANAR (Active) - Creo Parametric</Title>
        <WindowButtons>
          <button aria-label="Minimize"><Icon w={12} h={14} vb="0 0 12 14"><path d="M0 9h12v3H0z" fill="#6b6b6b" /></Icon></button>
          <button aria-label="Restore"><Icon w={15} h={12} vb="0 0 15 12"><path d="M4 4V1h10v6h-4M1 5h9v6H1zM1 6h9M4 2h10" stroke="#6b6b6b" strokeWidth="2" /></Icon></button>
          <button aria-label="Close window"><Icon w={12} h={12} vb="0 0 12 12"><path d="m1 1 10 10M11 1 1 11" stroke="#6b6b6b" strokeWidth="3" /></Icon></button>
        </WindowButtons>
      </TitleBar>

      <TabBar>
        <Tab $kind="file">File</Tab>
        {tabs.map(t => <Tab key={t}>{t}</Tab>)}
        <Tab $kind="active">Component Placement</Tab>
        <TabTools>
          <button aria-label="Collapse ribbon"><Icon w={14} h={8} vb="0 0 14 8"><path d="m0 7 7-7 7 7h-5L7 5 5 7z" fill="#d5d9da" /></Icon></button>
          <button aria-label="Search"><Icon w={14} h={14} vb="0 0 14 14"><circle cx="8" cy="5.500" r="4" stroke="#fff" strokeWidth="2" /><path d="m5 8.500-4 4" stroke="#fff" strokeWidth="3" /></Icon></button>
          <button aria-label="Learning"><Icon w={16} h={12} vb="0 0 16 12"><path d="m8 0 8 4-8 4-8-4zM3 7l5 2 5-2v3l-5 2-5-2z" fill="#fff" /><path d="M1 4v7" stroke="#fff" /></Icon></button>
          <button aria-label="Learning menu"><Caret c="#fff" /></button>
          <HelpMark aria-label="Help">?</HelpMark>
        </TabTools>
      </TabBar>

      <Ribbon>
        <RibbonMark>{I.assemble}</RibbonMark>
        <Dash>
          <Groups>
            <Group $w={163} $pl={14}>
              <GroupTitle>Method</GroupTitle>
              <Row $gap={1}>
                <MethodButton disabled>{I.iface}<span>By<br />Interface</span></MethodButton>
                <MethodButton disabled $on>{I.manual}<span>Manual</span></MethodButton>
              </Row>
            </Group>
            <Group $w={411}>
              <GroupTitle>Constraints</GroupTitle>
              <Stack>
                <Row>
                  <FieldLabel htmlFor="conn">Connection type:</FieldLabel>
                  <SelectBox $w={145}>
                    <select id="conn" defaultValue="User Defined">{connections.map(c => <option key={c}>{c}</option>)}</select>
                    <SelectArrow $on><Caret /></SelectArrow>
                  </SelectBox>
                  <ConvertButton aria-label="Convert constraints" disabled>{I.convert}</ConvertButton>
                </Row>
                <Row>
                  <FieldLabel htmlFor="cur">Current constraint:</FieldLabel>
                  <SelectBox $w={136} $dim>
                    <select id="cur"><option value="" /></select>
                  </SelectBox>
                  <OffsetBox $w={76} $h={30}>
                    <input aria-label="Offset value" defaultValue="0.00" disabled />
                    <button aria-label="Offset list" disabled><Caret c="#b4b4b4" /></button>
                  </OffsetBox>
                  <SquareButton aria-label="Flip direction" disabled>{I.flipDir}</SquareButton>
                </Row>
              </Stack>
              <Menu role="listbox" aria-label="Connection types">
                {connections.map(c => (
                  <MenuItem key={c} role="option" aria-selected={c === 'Planar'} $hot={c === 'Planar'}>{menuIcons[c]}{c}</MenuItem>
                ))}
              </Menu>
              <Pointer>
                <svg width="28" height="40" viewBox="0 0 28 40" aria-hidden="true"><path d="M2 2v31l7-6 6 11q4 0 5-4l-5-10h10z" fill="#f4f4f4" stroke="#000" strokeWidth="3" strokeLinejoin="round" /></svg>
              </Pointer>
            </Group>
            <Group $w={99}>
              <GroupTitle>Move</GroupTitle>
              <PressedButton $w={62} $tall>{I.dragger}<span>Display<br />Dragger</span></PressedButton>
            </Group>
            <Group $w={186}>
              <GroupTitle>Component Display</GroupTitle>
              <PlainButton>{I.sepWin}Separate Window</PlainButton>
              <PressedButton $w={127}>{I.mainWin}Main Window</PressedButton>
            </Group>
            <Group $w={141}>
              <GroupTitle>Status</GroupTitle>
              <StatusText>No constraints</StatusText>
            </Group>
            <PauseButton aria-label="Pause">{I.pause}</PauseButton>
            <Decision>
              <BigButton $on>{I.ok}OK</BigButton>
              <BigButton>{I.cancel}Cancel</BigButton>
            </Decision>
          </Groups>
          <DashTabs>
            <DashTab $w={131} $active aria-label="Placement" />
            <DashTab $w={93}>Move</DashTab>
            <DashTab $w={125}>Properties</DashTab>
          </DashTabs>
        </Dash>
        <HelpBox>
          <p>Use placement definition sets, select<br />assembly and component references to<br />place the component and determine how...</p>
          <a href="#help">Read more...</a>
        </HelpBox>
        <DatumButton>{I.datum}<span>Datum</span><Caret /></DatumButton>
      </Ribbon>

      <Body>
        <TreePane>
          <TreeTabs>
            <TreeTab $on aria-label="Model tree">{I.treeTab}</TreeTab>
            <TreeTab aria-label="Folders">{I.folders}</TreeTab>
          </TreeTabs>
          <TreeTools>
            <button aria-label="Display model">{I.greenCube}</button>
            <Handle />
            <button aria-label="Expand tree">{I.expand}</button>
            <button aria-label="List view">{I.list}</button>
            <button aria-label="Column display">{I.columnsEye}</button>
            <VLine />
            <button aria-label="Tree filters">{I.filterTree}</button>
            <button aria-label="Tree columns">{I.columnsDoc}</button>
            <VLine />
            <button aria-label="Settings">{I.gears}</button>
            <button aria-label="Layers">{I.layers}</button>
            <button aria-label="Select in tree">{I.pickTree}</button>
            <PushRight aria-label="Tree list">{I.docList}</PushRight>
          </TreeTools>
          <SearchRow>
            {I.funnel}
            <SearchBox>
              <input aria-label="Filter tree" />
              <button aria-label="Clear filter"><Icon w={10} h={10} vb="0 0 10 10"><path d="m1 1 8 8M9 1 1 9" stroke="#999" strokeWidth="2" /></Icon></button>
            </SearchBox>
            <button aria-label="Filter options"><Caret /></button>
            <AddButton aria-label="Add filter"><Icon w={14} h={14} vb="0 0 14 14"><path d="M5 0h4v5h5v4H9v5H5V9H0V5h5z" fill="#9c9c9c" /></Icon></AddButton>
          </SearchRow>
          <TreeHeader />
          <Tree>
            <TreeItem>{I.asm}<span>PLANAR.ASM</span></TreeItem>
            <TreeItem><Guide /><TreeIcon>{I.csys}</TreeIcon>DEFAULT_CSYS</TreeItem>
            {['ASM_RIGHT', 'ASM_TOP', 'ASM_FRONT'].map(n => (
              <TreeItem key={n} $dim><Guide /><TreeIcon>{I.plane}</TreeIcon>{n}</TreeItem>
            ))}
            <TreeItem><TreeToggle aria-label="Expand PLANAR1">{I.expander}</TreeToggle><TreeIcon>{I.part}</TreeIcon>PLANAR1.PRT</TreeItem>
          </Tree>
          <InsertLine />
          <SingleRow>
            <TreeItem><TreeToggle aria-label="Expand PLANAR2">{I.expander}</TreeToggle><TreeIcon>{I.part}</TreeIcon><NewName>{I.spark}PLANAR2.PRT</NewName></TreeItem>
          </SingleRow>
        </TreePane>

        <Canvas>
          <SceneView />
          <ViewBar>
            {viewTools.map(t => <ViewButton key={t.name} aria-label={t.name} $on={t.on}>{t.icon}</ViewButton>)}
          </ViewBar>
          <Panel>
            <Grip />
            <SetList>
              <SetName>Set1 (User Defined )</SetName>
              <SetRow />
              <RefBox>
                <RefButton $pr={20}>Select component item</RefButton>
                <RefButton $pr={36}>Select assembly item</RefButton>
              </RefBox>
              <NewLine $top={5} $w={124}>New Constraint</NewLine>
              <NewLine $top={41} $w={62}>New Set</NewLine>
            </SetList>
            <Options>
              <CheckLabel>
                <input type="checkbox" defaultChecked />
                <Icon w={11} h={11} vb="0 0 11 11"><path d="m1 5 3 4 6-8" stroke="#333" strokeWidth="2" /></Icon>
                Constraint Enabled
              </CheckLabel>
              <OptionLabel htmlFor="ctype" $top={18} $bottom={3}>Constraint Type</OptionLabel>
              <IconSelect $w={145}>
                <select id="ctype"><option>Automatic</option></select>
                <Icon><path d="M20 2h34L36 22h18L12 56l14-24H8z" fill="#444" /></Icon>
                <SelectArrow><Caret /></SelectArrow>
              </IconSelect>
              <OptionLabel htmlFor="offset" $top={17} $bottom={4}>Offset</OptionLabel>
              <Row>
                <NumberBox $w={86} $h={28}>
                  <input id="offset" defaultValue="0.00" disabled />
                  <button aria-label="Offset presets" disabled><Caret c="#b4b4b4" /></button>
                </NumberBox>
                <FlipButton disabled>Flip</FlipButton>
              </Row>
              <Legend>Status</Legend>
              <PanelStatus>No constraints</PanelStatus>
            </Options>
          </Panel>
        </Canvas>
      </Body>

      <StatusBar>
        <StatusIcons>
          <StatusButton $on aria-label="Navigator"><Icon><path d="M2 4h56v50H2z" fill="#fff" stroke="#888" strokeWidth="3" /><path d="M2 4h56v10H2z" fill="#ddd" stroke="#888" strokeWidth="2" /><path d="M3 17h16v40H3z" fill={blue} stroke={teal} strokeWidth="3" /><path d="M28 48q15-16 30 0-15 14-30 0z" fill="#fff" stroke="#444" strokeWidth="4" /><circle cx="43" cy="48" r="7" fill="#444" /></Icon></StatusButton>
          <StatusButton aria-label="Browser"><Icon><circle cx="30" cy="30" r="24" fill="#2f96cf" /><path d="M14 16q12-10 16 2t-10 12zM36 30q12-4 14 6L38 50q-6-6-2-20z" fill="#c5ecfb" /><path d="M52 4C60 0 62 8 52 22 38 42 10 62 3 56-2 50 10 38 16 30" stroke="#777" strokeWidth="4" /></Icon></StatusButton>
          <StatusButton aria-label="Full screen"><Icon><path d="M2 2h56v56H2z" fill="#e3f0f6" stroke="#1d6f95" strokeWidth="4" /></Icon></StatusButton>
          <VLine $m="0 0 0 5px" />
        </StatusIcons>
        <Message>
          <Icon w={14} h={15} vb="0 0 42 45"><path d="M2 12h20V2l19 20-19 21V32H2z" fill="#3aa6d6" stroke="#1d6f95" strokeWidth="3" /></Icon>
          Select any reference for auto type constraining.
        </Message>
        <FilterIcons>
          <VLine $h={38} $m="0 5px 0 0" /><VLine $h={38} $m="0 7px 0 0" />
          <button aria-label="Find"><Icon><path d="M4 26 14 4h12v52H2V36zM56 26 46 4H34v52h24V36z" fill="#444" /><path d="M24 18h12v20H24z" fill="#666" /><path d="M9 24h5v26H9zM44 24h6v26h-6z" fill="#aaa" /></Icon></button>
          <FindMenu aria-label="Find options"><Caret /></FindMenu>
          <VLine $h={38} $m="0 8px 0 0" />
          <button aria-label="Selection box"><Icon><path d="M2 10h56v40H2z" stroke="#a0a0a0" strokeWidth="4" strokeDasharray="9 6" /></Icon></button>
          <FindMenu aria-label="Selection options"><Caret c="#a9a9a9" /></FindMenu>
          <PickButton aria-label="Pick filter"><Icon><path d="M2 2h56v56H2z" fill="#f3f3f3" stroke="#a0a0a0" strokeWidth="4" strokeDasharray="6 5" /><path d="M4 18q14-14 28 0-14 12-28 0z" fill="#fff" stroke="#aaa" strokeWidth="3" /><circle cx="18" cy="18" r="5" fill="#aaa" /><path d="m34 28 22 22H44l-10 8z" fill="#fff" stroke="#aaa" strokeWidth="3" /></Icon></PickButton>
          <ToggleCube aria-label="Geometry only"><Icon w={23} h={23} vb="0 0 69 69"><path d="M3 16 17 3h49v47L51 66H3zM3 16h48v50M51 16 66 3" stroke="#999" strokeWidth="3" /><path d="M13 33 22 25h20v22l-8 9H13z" fill="#ddd" stroke="#aaa" strokeWidth="3" /></Icon></ToggleCube>
          <SelectBox $w={206} $h={28}>
            <select aria-label="Selection filter"><option>All</option></select>
            <SelectArrow><Caret /></SelectArrow>
          </SelectBox>
        </FilterIcons>
      </StatusBar>
    </Page>
  );
}
